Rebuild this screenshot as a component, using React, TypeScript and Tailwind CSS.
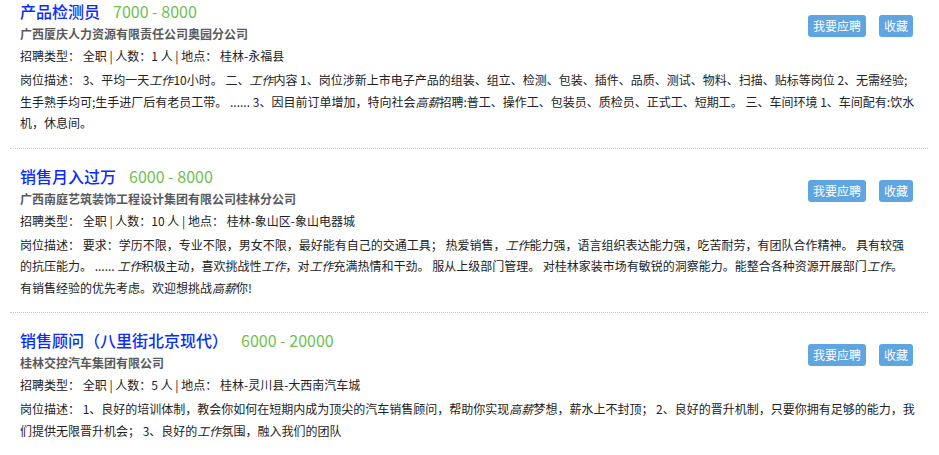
import React from "react";

type Seg = string | { i: string };
type Job = {
  title: string;
  salary: string;
  company: string;
  count: string;
  place: string;
  lines: Seg[][];
};

const jobs: Job[] = [
  {
    title: "产品检测员",
    salary: "7000 - 8000",
    company: "广西厦庆人力资源有限责任公司奥园分公司",
    count: "1",
    place: "桂林-永福县",
    lines: [
      ["岗位描述： 3、平均一天", { i: "工作" }, "10小时。 二、", { i: "工作" }, "内容 1、岗位涉新上市电子产品的组装、组立、检测、包装、插件、品质、测试、物料、扫描、贴标等岗位 2、无需经验;"],
      ["生手熟手均可;生手进厂后有老员工带。 ...... 3、因目前订单增加，特向社会", { i: "高薪" }, "招聘:普工、操作工、包装员、质检员、正式工、短期工。 三、车间环境 1、车间配有:饮水"],
      ["机，休息间。"],
    ],
  },
  {
    title: "销售月入过万",
    salary: "6000 - 8000",
    company: "广西南庭艺筑装饰工程设计集团有限公司桂林分公司",
    count: "10",
    place: "桂林-象山区-象山电器城",
    lines: [
      ["岗位描述： 要求：学历不限，专业不限，男女不限，最好能有自己的交通工具； 热爱销售，", { i: "工作" }, "能力强，语言组织表达能力强，吃苦耐劳，有团队合作精神。 具有较强"],
      ["的抗压能力。 ...... ", { i: "工作" }, "积极主动，喜欢挑战性", { i: "工作" }, "，对", { i: "工作" }, "充满热情和干劲。 服从上级部门管理。 对桂林家装市场有敏锐的洞察能力。能整合各种资源开展部门", { i: "工作" }, "。"],
      ["有销售经验的优先考虑。欢迎想挑战", { i: "高薪" }, "你!"],
    ],
  },
  {
    title: "销售顾问（八里街北京现代）",
    salary: "6000 - 20000",
    company: "桂林交控汽车集团有限公司",
    count: "5",
    place: "桂林-灵川县-大西南汽车城",
    lines: [
      ["岗位描述： 1、良好的培训体制，教会你如何在短期内成为顶尖的汽车销售顾问，帮助你实现", { i: "高薪" }, "梦想，薪水上不封顶； 2、良好的晋升机制，只要你拥有足够的能力，我"],
      ["们提供无限晋升机会； 3、良好的", { i: "工作" }, "氛围，融入我们的团队"],
    ],
  },
];

function JobItem({ job }: { job: Job }) {
  return (
    <div className="border-b border-dotted border-[#c8c8c8] pt-[15px] pb-[14px] pl-[10px] pr-[15px]">
      <div className="flex justify-between">
        <div>
          <div className="flex items-center h-[24px] leading-[24px]">
            <span className="text-[16px] font-medium text-[#0a2bff]">{job.title}</span>
            <span className="ml-[13px] text-[16px] text-[#6fbf4f]">{job.salary}</span>
          </div>
          <div className="h-[22px] leading-[22px] text-[12px] font-bold text-[#5a5a5a]">{job.company}</div>
          <div className="h-[22px] leading-[22px] text-[12px] text-[#222222]">
            招聘类型： 全职 | 人数：{job.count} 人 | 地点： {job.place}
          </div>
        </div>
        <div className="flex gap-[13px] pt-[16px] items-start">
          <button className="h-[22px] px-[5px] rounded-[3px] bg-[#5fa5e2] text-white text-[12px] leading-[22px]">我要应聘</button>
          <button className="h-[22px] px-[5px] rounded-[3px] bg-[#5fa5e2] text-white text-[12px] leading-[22px]">收藏</button>
        </div>
      </div>
      <div className="mt-[2px] text-[12px] leading-[21.5px] text-[#222222]">
        {job.lines.map((line, li) => (
          <div key={li} className="whitespace-nowrap">
            {line.map((s, si) =>
              typeof s === "string" ? <span key={si}>{s}</span> : <i key={si}>{s.i}</i>
            )}
          </div>
        ))}
      </div>
    </div>
  );
}

export default function App() {
  return (
    <div
      className="w-[939px] h-[455px] overflow-hidden bg-white"
      style={{ fontFamily: '"Microsoft YaHei", "Noto Sans CJK SC", sans-serif' }}
    >
      <div className="-mt-[16px] ml-[10px] w-[918px]">
        {jobs.map((j, i) => (
          <JobItem key={i} job={j} />
        ))}
      </div>
    </div>
  );
}
